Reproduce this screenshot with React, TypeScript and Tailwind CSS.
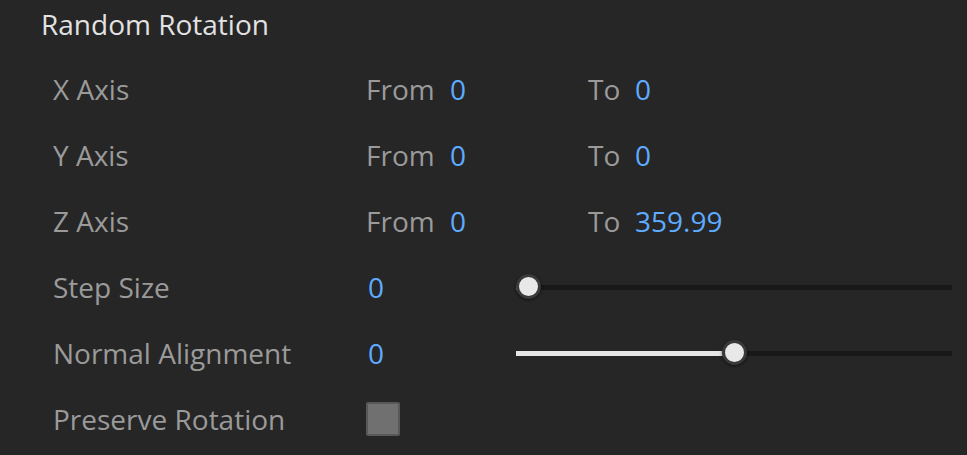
import React from "react";

const font = { fontFamily: '"Open Sans", "Noto Sans", sans-serif' };

function Slider({ value }: { value: number }) {
  const travel = 436 - 24;
  const left = value * travel;
  return (
    <div className="relative h-[26px] w-[436px] flex items-center">
      <div className="h-[5px] w-full bg-[#181818]" />
      <div className="absolute left-0 top-[10.5px] h-[5px] bg-[#e6e6e6]" style={{ width: left + 12 }} />
      <div
        className="absolute top-[0px] h-[25px] w-[25px] rounded-full border-[3px] border-[#393939] bg-[#e8e8e8] shadow-[0_1px_3px_rgba(0,0,0,0.6)]"
        style={{ left }}
      />
    </div>
  );
}

function AxisRow({ label, from, to }: { label: string; from: string; to: string }) {
  return (
    <div className="flex h-[66px] items-center">
      <div className="w-[313px] text-[#9a9a9a]">{label}</div>
      <div className="w-[84px] text-[#9a9a9a]">From</div>
      <div className="w-[138px] text-[#5eabff]">{from}</div>
      <div className="w-[47px] text-[#9a9a9a]">To</div>
      <div className="text-[#5eabff]">{to}</div>
    </div>
  );
}

export default function App() {
  return (
    <div className="h-[455px] w-[967px] overflow-hidden bg-[#262626] pl-[41px] text-[28px] leading-none" style={font}>
      <div className="flex h-[47px] items-center text-[28px] text-[#e2e2e2]">Random Rotation</div>
      <div className="pl-[12px] pt-[9px]">
        <AxisRow label="X Axis" from="0" to="0" />
        <AxisRow label="Y Axis" from="0" to="0" />
        <AxisRow label="Z Axis" from="0" to="359.99" />
        <div className="flex h-[66px] items-center">
          <div className="w-[315px] text-[#9a9a9a]">Step Size</div>
          <div className="w-[148px] text-[#5eabff]">0</div>
          <Slider value={0} />
        </div>
        <div className="flex h-[66px] items-center">
          <div className="w-[315px] text-[#9a9a9a]">Normal Alignment</div>
          <div className="w-[148px] text-[#5eabff]">0</div>
          <Slider value={0.5} />
        </div>
        <div className="flex h-[66px] items-center">
          <div className="w-[313px] text-[#9a9a9a]">Preserve Rotation</div>
          <div className="h-[34px] w-[34px] rounded-[2px] border-2 border-[#585858] bg-[#707070]" />
        </div>
      </div>
    </div>
  );
}
